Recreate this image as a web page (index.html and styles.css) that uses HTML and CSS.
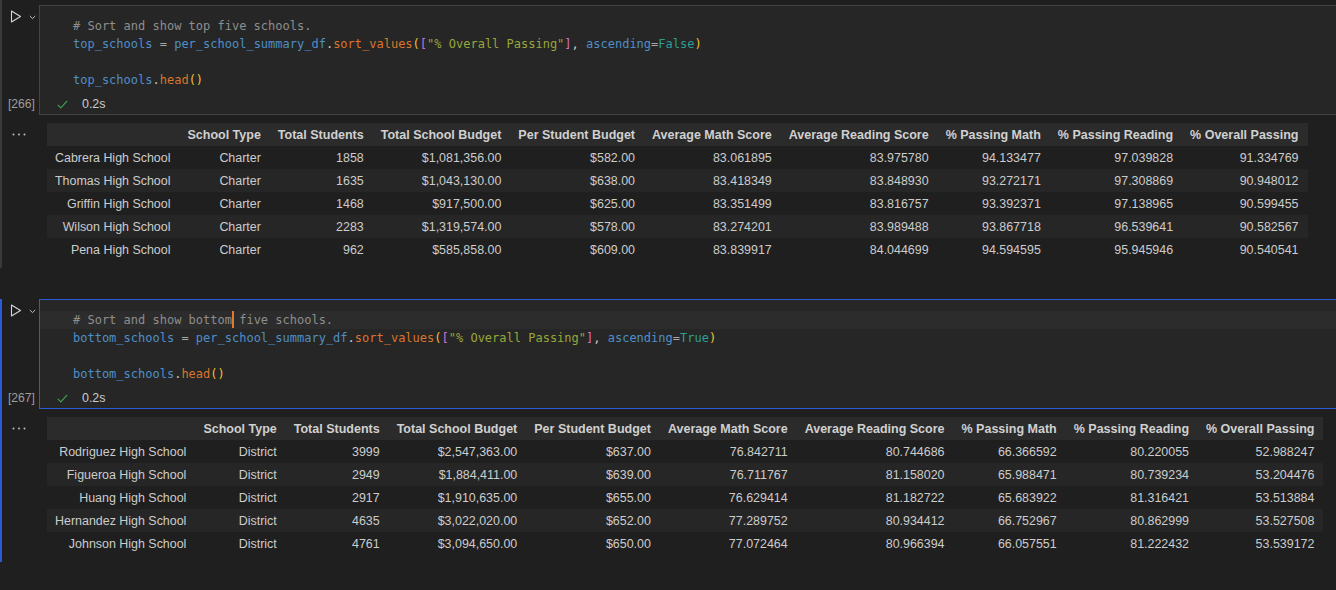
FILE: index.html
```html
<!DOCTYPE html>
<html lang="en">
<head>
<meta charset="utf-8">
<title>Notebook</title>
<link rel="stylesheet" href="styles.css">
</head>
<body>
<div class="notebook">

  <div class="cell cell-idle cell-first">
    <div class="input-row">
      <div class="gutter">
        <div class="run">
          <svg class="run-icon" width="12" height="13" viewBox="0 0 12 13"><path d="M1.5 1 L10.5 6.5 L1.5 12 Z" fill="none" stroke="#d4d4d4" stroke-width="1.1" stroke-linejoin="round"/></svg>
          <svg class="chev" width="7" height="5" viewBox="0 0 7 5"><path d="M0.8 1 L3.5 3.6 L6.2 1" fill="none" stroke="#bdbdbd" stroke-width="1"/></svg>
        </div>
        <div class="exec-count">[266]</div>
      </div>
      <div class="editor">
        <div class="code">
          <div class="line"><span class="t-com"># Sort and show top five schools.</span></div>
          <div class="line"><span class="t-var">top_schools</span><span class="t-op"> = </span><span class="t-var">per_school_summary_df</span><span class="t-pun">.</span><span class="t-fn">sort_values</span><span class="t-b1">(</span><span class="t-b2">[</span><span class="t-str">"% Overall Passing"</span><span class="t-b2">]</span><span class="t-pun">, </span><span class="t-var">ascending</span><span class="t-op">=</span><span class="t-kw">False</span><span class="t-b1">)</span></div>
          <div class="line"> </div>
          <div class="line"><span class="t-var">top_schools</span><span class="t-pun">.</span><span class="t-fn">head</span><span class="t-b1">()</span></div>
        </div>
        <div class="status">
          <svg class="check" width="11" height="9" viewBox="0 0 11 9"><path d="M0.8 4.8 L3.8 7.8 L10.2 0.8" fill="none" stroke="#3fa04f" stroke-width="1.2"/></svg>
          <span class="time">0.2s</span>
        </div>
      </div>
    </div>
    <div class="output-row">
      <div class="gutter out-gutter">
        <svg class="dots" width="14" height="3" viewBox="0 0 14 3"><circle cx="1.5" cy="1.5" r="1" fill="#bdbdbd"/><circle cx="7" cy="1.5" r="1" fill="#bdbdbd"/><circle cx="12.5" cy="1.5" r="1" fill="#bdbdbd"/></svg>
      </div>
      <div class="output">
        <table class="df">
          <thead>
            <tr><th></th><th>School Type</th><th>Total Students</th><th>Total School Budget</th><th>Per Student Budget</th><th>Average Math Score</th><th>Average Reading Score</th><th>% Passing Math</th><th>% Passing Reading</th><th>% Overall Passing</th></tr>
          </thead>
          <tbody>
            <tr><td>Cabrera High School</td><td>Charter</td><td>1858</td><td>$1,081,356.00</td><td>$582.00</td><td>83.061895</td><td>83.975780</td><td>94.133477</td><td>97.039828</td><td>91.334769</td></tr>
            <tr><td>Thomas High School</td><td>Charter</td><td>1635</td><td>$1,043,130.00</td><td>$638.00</td><td>83.418349</td><td>83.848930</td><td>93.272171</td><td>97.308869</td><td>90.948012</td></tr>
            <tr><td>Griffin High School</td><td>Charter</td><td>1468</td><td>$917,500.00</td><td>$625.00</td><td>83.351499</td><td>83.816757</td><td>93.392371</td><td>97.138965</td><td>90.599455</td></tr>
            <tr><td>Wilson High School</td><td>Charter</td><td>2283</td><td>$1,319,574.00</td><td>$578.00</td><td>83.274201</td><td>83.989488</td><td>93.867718</td><td>96.539641</td><td>90.582567</td></tr>
            <tr><td>Pena High School</td><td>Charter</td><td>962</td><td>$585,858.00</td><td>$609.00</td><td>83.839917</td><td>84.044699</td><td>94.594595</td><td>95.945946</td><td>90.540541</td></tr>
          </tbody>
        </table>
      </div>
    </div>
  </div>

  <div class="cell cell-focused">
    <div class="input-row">
      <div class="gutter">
        <div class="run">
          <svg class="run-icon" width="12" height="13" viewBox="0 0 12 13"><path d="M1.5 1 L10.5 6.5 L1.5 12 Z" fill="none" stroke="#d4d4d4" stroke-width="1.1" stroke-linejoin="round"/></svg>
          <svg class="chev" width="7" height="5" viewBox="0 0 7 5"><path d="M0.8 1 L3.5 3.6 L6.2 1" fill="none" stroke="#bdbdbd" stroke-width="1"/></svg>
        </div>
        <div class="exec-count">[267]</div>
      </div>
      <div class="editor">
        <div class="code">
          <div class="line current"><span class="t-com"># Sort and show bottom</span><span class="cursor"></span><span class="t-com"> five schools.</span></div>
          <div class="line"><span class="t-var">bottom_schools</span><span class="t-op"> = </span><span class="t-var">per_school_summary_df</span><span class="t-pun">.</span><span class="t-fn">sort_values</span><span class="t-b1">(</span><span class="t-b2">[</span><span class="t-str">"% Overall Passing"</span><span class="t-b2">]</span><span class="t-pun">, </span><span class="t-var">ascending</span><span class="t-op">=</span><span class="t-kw">True</span><span class="t-b1">)</span></div>
          <div class="line"> </div>
          <div class="line"><span class="t-var">bottom_schools</span><span class="t-pun">.</span><span class="t-fn">head</span><span class="t-b1">()</span></div>
        </div>
        <div class="status">
          <svg class="check" width="11" height="9" viewBox="0 0 11 9"><path d="M0.8 4.8 L3.8 7.8 L10.2 0.8" fill="none" stroke="#3fa04f" stroke-width="1.2"/></svg>
          <span class="time">0.2s</span>
        </div>
      </div>
    </div>
    <div class="output-row">
      <div class="gutter out-gutter">
        <svg class="dots" width="14" height="3" viewBox="0 0 14 3"><circle cx="1.5" cy="1.5" r="1" fill="#bdbdbd"/><circle cx="7" cy="1.5" r="1" fill="#bdbdbd"/><circle cx="12.5" cy="1.5" r="1" fill="#bdbdbd"/></svg>
      </div>
      <div class="output">
        <table class="df">
          <thead>
            <tr><th></th><th>School Type</th><th>Total Students</th><th>Total School Budget</th><th>Per Student Budget</th><th>Average Math Score</th><th>Average Reading Score</th><th>% Passing Math</th><th>% Passing Reading</th><th>% Overall Passing</th></tr>
          </thead>
          <tbody>
            <tr><td>Rodriguez High School</td><td>District</td><td>3999</td><td>$2,547,363.00</td><td>$637.00</td><td>76.842711</td><td>80.744686</td><td>66.366592</td><td>80.220055</td><td>52.988247</td></tr>
            <tr><td>Figueroa High School</td><td>District</td><td>2949</td><td>$1,884,411.00</td><td>$639.00</td><td>76.711767</td><td>81.158020</td><td>65.988471</td><td>80.739234</td><td>53.204476</td></tr>
            <tr><td>Huang High School</td><td>District</td><td>2917</td><td>$1,910,635.00</td><td>$655.00</td><td>76.629414</td><td>81.182722</td><td>65.683922</td><td>81.316421</td><td>53.513884</td></tr>
            <tr><td>Hernandez High School</td><td>District</td><td>4635</td><td>$3,022,020.00</td><td>$652.00</td><td>77.289752</td><td>80.934412</td><td>66.752967</td><td>80.862999</td><td>53.527508</td></tr>
            <tr><td>Johnson High School</td><td>District</td><td>4761</td><td>$3,094,650.00</td><td>$650.00</td><td>77.072464</td><td>80.966394</td><td>66.057551</td><td>81.222432</td><td>53.539172</td></tr>
          </tbody>
        </table>
      </div>
    </div>
  </div>

</div>
</body>
</html>
```

FILE: styles.css
```css
* { box-sizing: border-box; }

html, body {
  margin: 0;
  padding: 0;
  background: #1f1f1f;
  height: 100%;
  overflow: hidden;
}

body {
  font-family: "Liberation Sans", Arial, sans-serif;
  color: #cccccc;
}

.notebook {
  display: flex;
  flex-direction: column;
  gap: 31px;
}

.cell {
  display: flex;
  flex-direction: column;
  border-left: 2px solid transparent;
}

.cell-idle { border-left-color: #3a3a3a; }
.cell-first { padding-top: 5px; }
.cell-focused { border-left-color: #2b5ad6; }

.input-row {
  display: flex;
}

.gutter {
  width: 37px;
  flex: none;
  display: flex;
  flex-direction: column;
  justify-content: space-between;
}

.run {
  display: flex;
  align-items: center;
  padding: 5px 0 0 8px;
  gap: 7px;
}

.run-icon { display: block; }
.chev { display: block; margin-top: 1px; }

.exec-count {
  font-size: 12.2px;
  line-height: 18px;
  color: #9d9d9d;
  text-align: right;
  padding-right: 4px;
  margin-bottom: 2px;
}

.editor {
  flex: 1;
  background: #262626;
  border: 1px solid #444444;
  border-right: none;
  padding: 11px 0 1px 0;
}

.cell-focused .editor { border-color: #2b5ad6; }

.code {
  font-family: "DejaVu Sans Mono", "Liberation Mono", monospace;
  font-size: 12px;
  line-height: 18px;
}

.line {
  height: 18px;
  padding-left: 33px;
  white-space: pre;
}

.line.current { background: #2c2c2c; }

.cursor {
  display: inline-block;
  width: 2px;
  height: 17px;
  background: #e07a2f;
  vertical-align: top;
  margin-right: -2px;
}

.t-com { color: #8e8e8e; }
.t-var { color: #4f8fc7; }
.t-op { color: #a8a8a8; }
.t-pun { color: #c8c8c8; }
.t-fn { color: #d9752c; }
.t-b1 { color: #f2c12e; }
.t-b2 { color: #d46fd1; }
.t-str { color: #98a63a; }
.t-kw { color: #2c9e95; }

.status {
  display: flex;
  align-items: center;
  height: 18px;
  margin-top: 6px;
  padding-left: 17px;
}

.check { display: block; margin-right: 14px; }

.time {
  font-size: 12.45px;
  color: #cccccc;
}

.output-row {
  display: flex;
  padding-top: 8px;
  padding-bottom: 7px;
}

.out-gutter {
  justify-content: flex-start;
  padding: 10px 0 0 10px;
}

.dots { display: block; }

.output {
  flex: 1;
  padding-left: 8px;
}

.df {
  border-collapse: collapse;
  font-size: 12.45px;
  color: #cccccc;
}

.df th, .df td {
  height: 23px;
  padding: 0 9px 0 8px;
  text-align: right;
  white-space: nowrap;
  vertical-align: middle;
}

.df th {
  font-weight: bold;
  font-size: 12.5px;
  color: #d0d0d0;
}

.df thead tr { background: #2b2b2b; }
.df tbody tr:nth-child(even) { background: #262626; }
```
